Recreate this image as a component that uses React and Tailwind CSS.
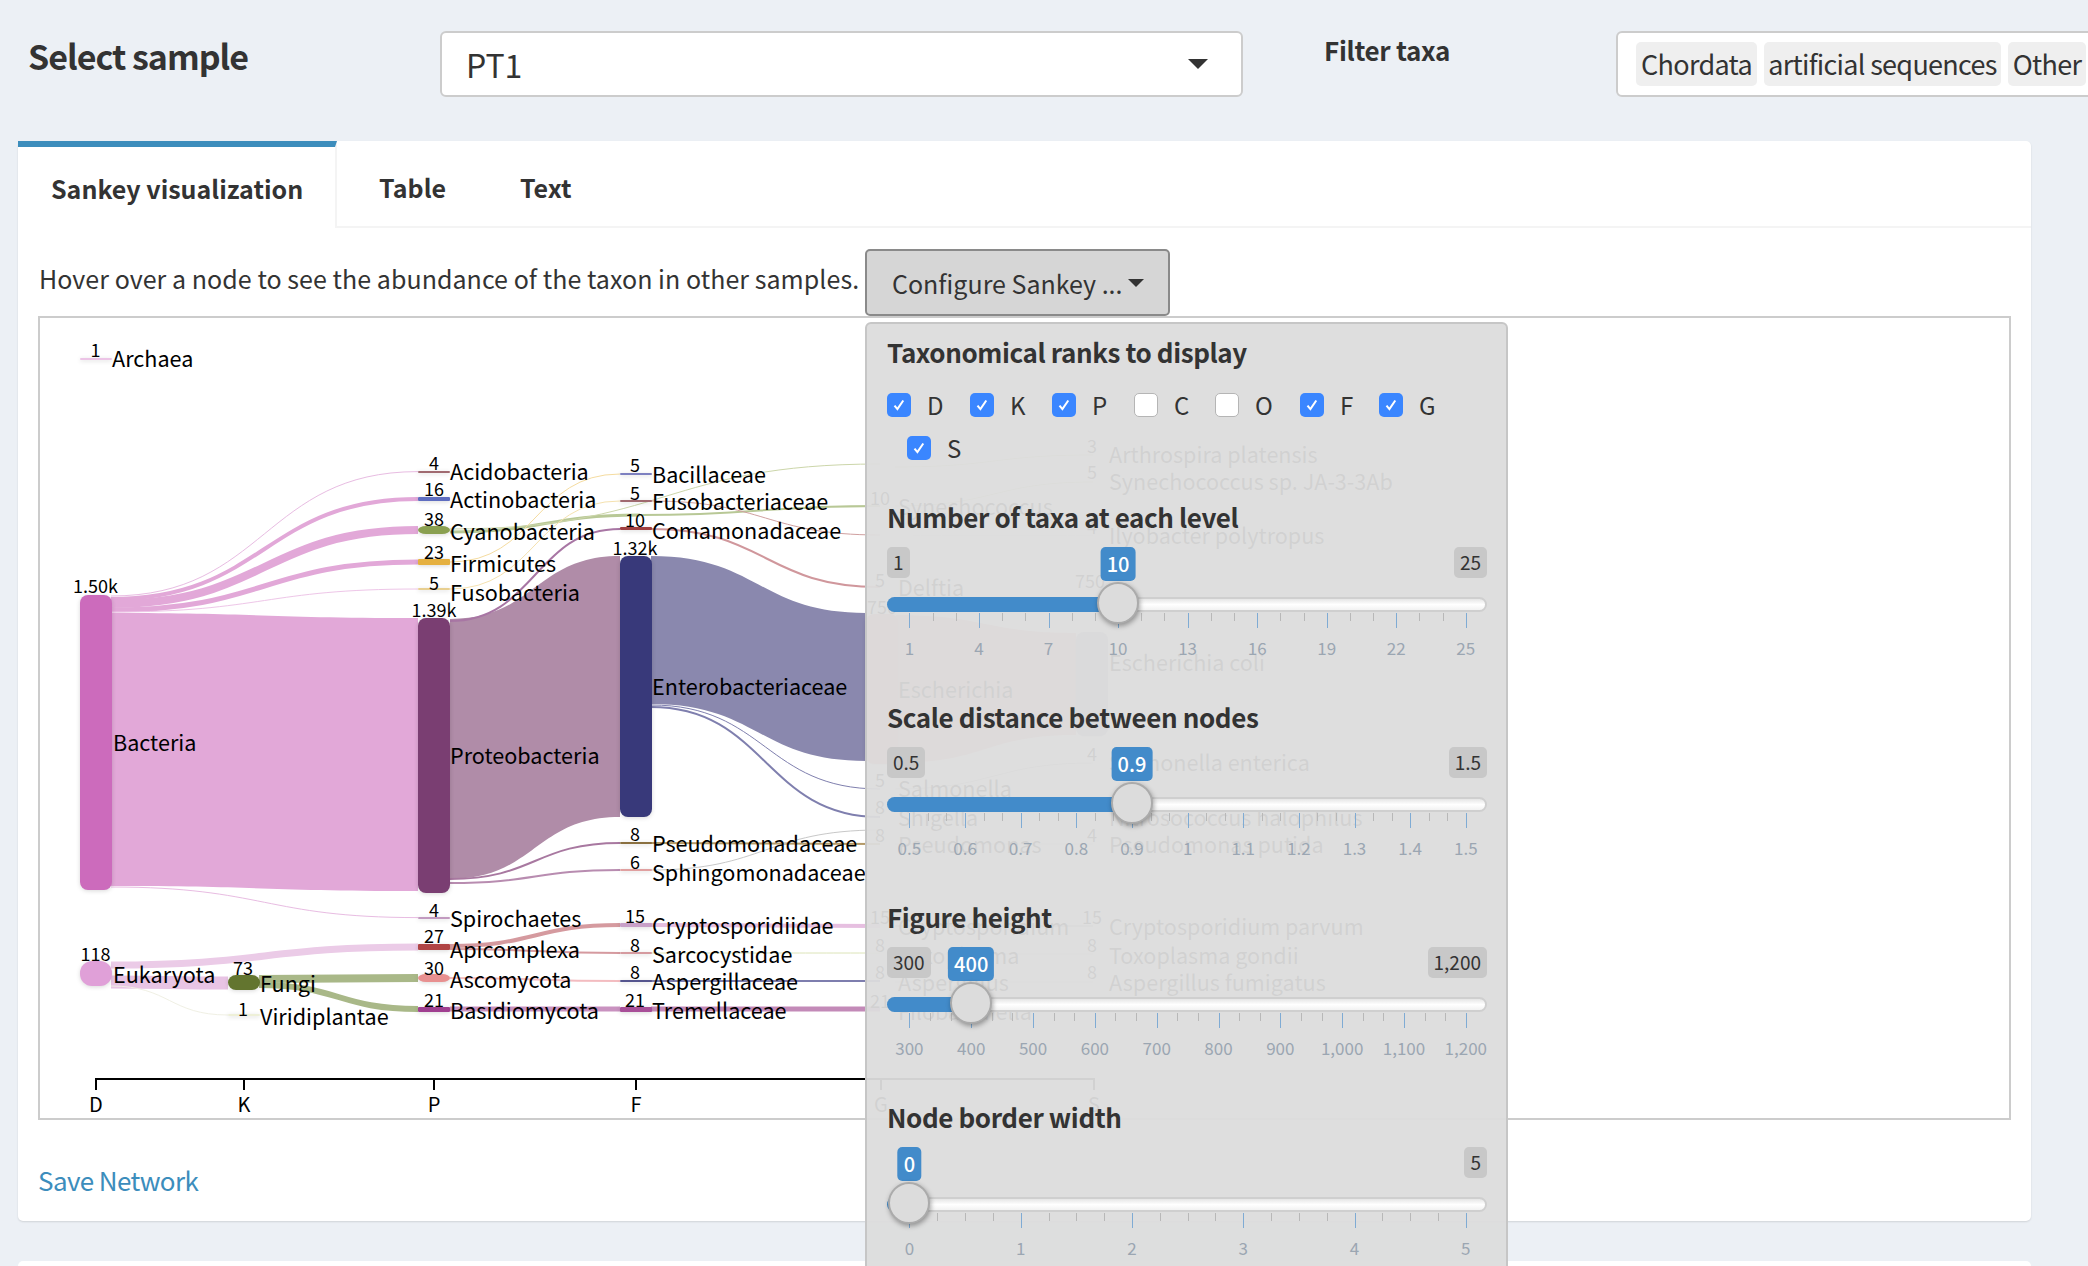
import React from "react";

// horizontal sankey band between two points
const band = (x0, y0, x1, y1) => {
  const xm = (x0 + x1) / 2;
  return `M${x0} ${y0}C${xm} ${y0} ${xm} ${y1} ${x1} ${y1}`;
};

// filled sankey band with a top and bottom edge
const ribbon = (x0, t0, b0, x1, t1, b1) => {
  const xm = (x0 + x1) / 2;
  return `M${x0} ${t0}C${xm} ${t0} ${xm} ${t1} ${x1} ${t1}L${x1} ${b1}C${xm} ${b1} ${xm} ${b0} ${x0} ${b0}Z`;
};

const links = [
  [111, 597, 418, 472.6, 1, "#e8bce2"],
  [111, 600, 418, 500, 4, "#e2a8d8"],
  [111, 605, 418, 531, 8, "#e2a8d8"],
  [111, 611, 418, 563, 5, "#e2a8d8"],
  [111, 613, 418, 590, 1, "#eec6e8"],
  [111, 888, 418, 918.6, 1, "#e8bce2"],
  [111, 966, 418, 948, 7, "#ebcbe7"],
  [111, 983, 228, 984, 13, "#e8c4e4"],
  [111, 987, 228, 1016, 1, "#f0f0e4"],
  [259, 980, 418, 979, 8, "#a9b888"],
  [259, 986, 418, 1010, 6, "#a9b888"],
  [450, 947, 620, 926, 4, "#d59a9f"],
  [450, 950, 620, 954, 2, "#d59a9f"],
  [450, 979, 620, 982, 2, "#f3bcc0"],
  [450, 1010, 620, 1010, 5, "#c992c0"],
  [450, 533, 640, 516, 3, "#b8c896"],
  [450, 530, 880, 465, 1, "#ccd6aa"],
  [640, 516, 880, 507, 2, "#b8c896"],
  [450, 563, 620, 475, 1, "#f5dca0"],
  [450, 590, 620, 502, 1, "#f5e2b0"],
  [450, 622, 620, 530, 2, "#a876a4"],
  [450, 880, 620, 844, 2, "#a878a0"],
  [450, 884, 620, 871, 2, "#b88cb0"],
  [651, 530, 880, 588, 2, "#d0979c"],
  [651, 502, 880, 536, 1, "#d0a0a0"],
  [651, 706, 880, 790, 1, "#7f7fae"],
  [651, 708, 880, 818, 2, "#7f7fae"],
  [651, 844, 880, 845, 2, "#b49a68"],
  [651, 871, 880, 831, 1, "#c8c8c8"],
  [651, 926, 880, 927, 4, "#e6bfe0"],
  [651, 954, 880, 954, 1, "#dce4b8"],
  [651, 982, 880, 982, 2, "#7e7eae"],
  [651, 1010, 880, 1010, 5, "#c38ab8"],
  [895, 468, 1093, 456, 1, "#ccd6aa"],
  [895, 507, 1093, 483, 1, "#ccd6aa"],
  [895, 536, 1093, 537, 1, "#ddd"],
  [895, 790, 1093, 764, 1, "#bbb"],
  [895, 845, 1093, 845, 1, "#bbb"],
  [895, 927, 1093, 927, 2, "#bbb"],
  [895, 955, 1093, 955, 1, "#bbb"],
  [895, 983, 1093, 983, 1, "#bbb"],
];

const nodes = [
  [80, 596, 32, 295, "#cc6bbc"],
  [80, 962, 32, 25, "#e0a0d8"],
  [80, 359, 32, 2, "#ecc4e6"],
  [228, 976, 32, 15, "#63752f"],
  [228, 1015, 32, 2, "#eef0d8"],
  [418, 619, 32, 275, "#7a3e72"],
  [418, 472, 32, 2, "#a06a70"],
  [418, 498, 32, 4, "#5f6dc0"],
  [418, 527, 32, 8, "#8aa050"],
  [418, 560, 32, 6, "#e5b040"],
  [418, 589, 32, 2, "#e8cf90"],
  [418, 918, 32, 2, "#c29ac0"],
  [418, 945, 32, 6, "#b04444"],
  [418, 975, 32, 8, "#e89090"],
  [418, 1008, 32, 5, "#a03f90"],
  [620, 557, 32, 261, "#38397a"],
  [620, 474, 32, 2, "#7d80c0"],
  [620, 501, 32, 2, "#a06a70"],
  [620, 528, 32, 3, "#a04040"],
  [620, 843, 32, 2, "#8a7040"],
  [620, 870, 32, 2, "#e0a0a0"],
  [620, 924, 32, 4, "#c8a0c8"],
  [620, 953, 32, 2, "#d59a9f"],
  [620, 981, 32, 2, "#55558e"],
  [620, 1008, 32, 5, "#a84f98"],
  [866, 615, 32, 150, "#e8a0a0"],
  [1076, 633, 32, 104, "#a8a8c4"],
];

const names = [
  ["Archaea", 112, 358],
  ["Bacteria", 113, 742.5],
  ["Eukaryota", 113, 974.5],
  ["Fungi", 260, 983.5],
  ["Viridiplantae", 260, 1016.5],
  ["Acidobacteria", 450, 471.5],
  ["Actinobacteria", 450, 499],
  ["Cyanobacteria", 450, 531],
  ["Firmicutes", 450, 563.5],
  ["Fusobacteria", 450, 592],
  ["Proteobacteria", 450, 755],
  ["Spirochaetes", 450, 918.5],
  ["Apicomplexa", 450, 949],
  ["Ascomycota", 450, 979],
  ["Basidiomycota", 450, 1010],
  ["Bacillaceae", 652, 474],
  ["Fusobacteriaceae", 652, 501.5],
  ["Comamonadaceae", 652, 530],
  ["Enterobacteriaceae", 652, 686.5],
  ["Pseudomonadaceae", 652, 843],
  ["Sphingomonadaceae", 652, 872],
  ["Cryptosporidiidae", 652, 925],
  ["Sarcocystidae", 652, 954],
  ["Aspergillaceae", 652, 981],
  ["Tremellaceae", 652, 1010],
  ["Synechococcus", 898, 506],
  ["Delftia", 898, 587],
  ["Escherichia", 898, 689],
  ["Salmonella", 898, 788],
  ["Shigella", 898, 817],
  ["Pseudomonas", 898, 844],
  ["Cryptosporidium", 898, 926],
  ["Toxoplasma", 898, 955],
  ["Aspergillus", 898, 982],
  ["Filobasidiella", 898, 1011],
  ["Arthrospira platensis", 1109, 454],
  ["Synechococcus sp. JA-3-3Ab", 1109, 481],
  ["Ilyobacter polytropus", 1109, 535],
  ["Escherichia coli", 1109, 662],
  ["Salmonella enterica", 1109, 762],
  ["Nitrosococcus halophilus", 1109, 817],
  ["Pseudomonas putida", 1109, 844],
  ["Cryptosporidium parvum", 1109, 926],
  ["Toxoplasma gondii", 1109, 955],
  ["Aspergillus fumigatus", 1109, 982],
];

const counts = [
  ["1", 95.5, 350],
  ["1.50k", 95.5, 586],
  ["118", 95.5, 954],
  ["73", 243, 968],
  ["1", 243, 1009],
  ["4", 434, 463],
  ["16", 434, 489],
  ["38", 434, 519],
  ["23", 434, 552],
  ["5", 434, 582.5],
  ["1.39k", 434, 610],
  ["4", 434, 910],
  ["27", 434, 936],
  ["30", 434, 968],
  ["21", 434, 1000],
  ["5", 635, 465],
  ["5", 635, 493],
  ["10", 635, 520],
  ["1.32k", 635, 548],
  ["8", 635, 834],
  ["6", 635, 862],
  ["15", 635, 916],
  ["8", 635, 945],
  ["8", 635, 972],
  ["21", 635, 1000],
  ["10", 880, 498],
  ["5", 880, 580],
  ["750", 882, 607],
  ["5", 880, 780],
  ["8", 880, 807],
  ["8", 880, 835],
  ["15", 880, 917],
  ["8", 880, 945],
  ["8", 880, 972],
  ["21", 880, 1001],
  ["3", 1092, 446],
  ["5", 1092, 472],
  ["4", 1092, 527],
  ["750", 1090, 581],
  ["4", 1092, 754],
  ["4", 1092, 835],
  ["15", 1092, 917],
  ["8", 1092, 945],
  ["8", 1092, 972],
];

const SankeyChart = () => (
  <svg viewBox="40 319 1969 800" width="1969" height="800" className="block">
    {/* big bands first so the thin ones sit on top */}
    <path d={ribbon(111, 614, 887, 418, 619, 892)} fill="#e2a8d8" />
    <path d={ribbon(450, 620, 880, 620, 557, 818)} fill="#b08ca8" />
    <path d={ribbon(651, 557, 705, 866, 614, 762)} fill="#8a88ae" />
    <path d={ribbon(896, 616, 764, 1076, 634, 736)} fill="#e8b4b4" />
    {links.map(([x0, y0, x1, y1, w, c], i) => (
      <path key={i} d={band(x0, y0, x1, y1)} stroke={c} strokeWidth={w} fill="none" />
    ))}
    {nodes.map(([x, y, w, h, c], i) => (
      <rect key={i} x={x} y={y} width={w} height={h} rx={h > 20 && h < 30 ? 12 : h > 6 ? 8 : 1} fill={c} className="drop-shadow-sm" />
    ))}
    {names.map(([t, x, y], i) => (
      <text key={i} x={x} y={y} fontSize="21.6" fill="#000" dominantBaseline="central">
        {t}
      </text>
    ))}
    {counts.map(([t, x, y], i) => (
      <text key={i} x={x} y={y} fontSize="18" fill="#000" textAnchor="middle" dominantBaseline="central">
        {t}
      </text>
    ))}
    <path d="M96 1091V1080H1094V1091M244 1080V1091M434 1080V1091M636 1080V1091M881 1080V1091" stroke="#000" strokeWidth="2" fill="none" />
    {[["D", 96], ["K", 244], ["P", 434], ["F", 636], ["G", 881], ["S", 1094]].map(([t, x]) => (
      <text key={t} x={x} y={1104} fontSize="20" fill="#000" textAnchor="middle" dominantBaseline="central">
        {t}
      </text>
    ))}
  </svg>
);

const RankCheck = ({ label, checked, className }) => (
  <div className={`flex items-center gap-[16px] ${className}`}>
    {checked ? (
      <span className="flex h-[24px] w-[24px] items-center justify-center rounded-[5px] bg-[#3a86ff]">
        <svg viewBox="0 0 16 16" className="h-[18px] w-[18px]">
          <path d="M4 8.5l2.6 3.2L11.8 4" fill="none" stroke="#fff" strokeWidth="1.8" />
        </svg>
      </span>
    ) : (
      <span className="h-[24px] w-[24px] rounded-[5px] border border-[#b5b5b5] bg-white" />
    )}
    <span className="text-[24px] leading-[24px] text-[#333]">{label}</span>
  </div>
);

const PanelHeading = ({ children }) => (
  <h4 className="relative -top-[1px] h-[40px] text-[26px] font-bold leading-[40px] tracking-[-0.4px] text-[#333]">{children}</h4>
);

const Slider = ({ title, min, max, value, pos, labels, minors }) => {
  const center = 22.4 + pos * 556.4;
  const step = 556.4 / (labels.length - 1);
  const minorTicks = [];
  for (let i = 0; i < labels.length - 1; i++) {
    for (let j = 1; j <= minors; j++) {
      minorTicks.push(22.4 + step * (i + j / (minors + 1)));
    }
  }
  return (
    <div className="w-[600px]">
      <PanelHeading>{title}</PanelHeading>
      <div className="relative h-[160px]">
        {pos > 0 && (
          <span className="absolute left-0 top-[9px] flex h-[31px] items-center rounded-[5px] bg-[#c8c8c8] px-[6px] text-[19px] text-[#333]">{min}</span>
        )}
        <span className="absolute right-0 top-[9px] flex h-[31px] items-center rounded-[5px] bg-[#c8c8c8] px-[6px] text-[19px] text-[#333]">{max}</span>
        <div className="absolute left-0 right-0 top-[59px] h-[15px] rounded-full border-2 border-[#cfcfcf] bg-gradient-to-b from-[#e6e6e6] via-white to-[#f2f2f2]" />
        <div className="absolute left-0 top-[59px] h-[15px] rounded-l-full bg-[#428bca]" style={{ width: center }} />
        {minorTicks.map((x, i) => (
          <span key={i} className="absolute top-[75px] h-[8px] w-[1px] bg-[#b8b8b8]" style={{ left: x }} />
        ))}
        {labels.map((t, i) => (
          <span key={t} className="absolute top-[75px] h-[15px] w-[1px] bg-[#7fabd4]" style={{ left: 22.4 + step * i }} />
        ))}
        {labels.map((t, i) => (
          <span key={t} className="absolute top-[96px] w-[60px] -translate-x-1/2 text-center text-[17px] leading-[28px] text-[#9ba6b2]" style={{ left: 22.4 + step * i }}>
            {t}
          </span>
        ))}
        <span className="absolute top-[9px] flex h-[34px] -translate-x-1/2 items-center rounded-[5px] bg-[#428bca] px-[6px] text-[20px] font-medium text-white" style={{ left: center }}>
          {value}
        </span>
        <span className="absolute top-[44px] h-[42px] w-[42px] -translate-x-1/2 rounded-full border-2 border-[#ababab] bg-[#dcdcdc] shadow-[1px_2px_5px_rgba(0,0,0,0.35)]" style={{ left: center }} />
      </div>
    </div>
  );
};

const ConfigPanel = () => (
  <div className="absolute left-[826px] top-[73px] h-[1000px] w-[643px] rounded-[6px] border-2 border-[#c6c6c6] bg-[#dcdcdc]/95 pl-[20px] pt-[9px]">
    <PanelHeading>Taxonomical ranks to display</PanelHeading>
    <div className="mt-[20px] flex">
      <RankCheck label="D" checked className="w-[83px]" />
      <RankCheck label="K" checked className="w-[82px]" />
      <RankCheck label="P" checked className="w-[82px]" />
      <RankCheck label="C" className="w-[81px]" />
      <RankCheck label="O" className="w-[85px]" />
      <RankCheck label="F" checked className="w-[79px]" />
      <RankCheck label="G" checked />
    </div>
    <div className="ml-[20px] mt-[19px] mb-[38px] flex">
      <RankCheck label="S" checked />
    </div>
    <Slider title="Number of taxa at each level" min="1" max="25" value="10" pos={0.375} minors={2} labels={["1", "4", "7", "10", "13", "16", "19", "22", "25"]} />
    <Slider title="Scale distance between nodes" min="0.5" max="1.5" value="0.9" pos={0.4} minors={2} labels={["0.5", "0.6", "0.7", "0.8", "0.9", "1", "1.1", "1.2", "1.3", "1.4", "1.5"]} />
    <Slider title="Figure height" min="300" max="1,200" value="400" pos={1 / 9} minors={2} labels={["300", "400", "500", "600", "700", "800", "900", "1,000", "1,100", "1,200"]} />
    <Slider title="Node border width" min="0" max="5" value="0" pos={0} minors={3} labels={["0", "1", "2", "3", "4", "5"]} />
  </div>
);

const App = () => {
  return (
    <div className="relative h-[1266px] w-[2088px] overflow-hidden bg-[#ecf0f5] pt-[31px] font-['Noto_Sans_CJK_SC','Open_Sans',sans-serif] text-[#333]">
      {/* sample select and taxa filter */}
      <div className="flex h-[66px] items-start pl-[28px]">
        <h3 className="mt-[3px] w-[412px] shrink-0 text-[34px] font-bold leading-[44px] tracking-[-1px]">Select sample</h3>
        <div className="flex h-[66px] w-[803px] shrink-0 items-center justify-between rounded-[6px] border-2 border-[#cccccc] bg-white pl-[24px] pr-[33px]">
          <span className="text-[32px] leading-[40px]">PT1</span>
          <span className="h-0 w-0 border-x-[10px] border-t-[10px] border-x-transparent border-t-[#333]" />
        </div>
        <h4 className="ml-[81px] mt-[1px] w-[292px] shrink-0 text-[26px] font-bold leading-[36px] tracking-[-0.3px]">Filter taxa</h4>
        <div className="flex h-[66px] w-[500px] shrink-0 gap-[7px] rounded-[6px] border-2 border-[#cccccc] bg-white pl-[18px] pt-[9px] text-[27px] tracking-[-0.7px]">
          <span className="flex h-[44px] w-[121px] shrink-0 items-center justify-center whitespace-nowrap rounded-[5px] bg-[#efefef]">Chordata</span>
          <span className="flex h-[44px] w-[237px] shrink-0 items-center justify-center whitespace-nowrap rounded-[5px] bg-[#efefef]">artificial sequences</span>
          <span className="flex h-[44px] w-[78px] shrink-0 items-center justify-center whitespace-nowrap rounded-[5px] bg-[#efefef]">Other</span>
        </div>
      </div>

      {/* main box with tabs */}
      <div className="ml-[18px] mt-[44px] h-[1080px] w-[2013px] rounded-[5px] bg-white shadow-[0_1px_2px_rgba(0,0,0,0.12)]">
        <div className="flex h-[87px] border-b-2 border-[#f4f4f4]">
          <div className="-mb-[2px] flex h-[87px] w-[319px] items-center border-r-2 border-t-[6px] border-[#f4f4f4] border-t-[#3c8dbc] bg-white pl-[33px] pt-[2px] text-[25px] font-bold">
            Sankey visualization
          </div>
          <div className="ml-[42px] flex items-center pt-[8px] text-[25px] font-bold">Table</div>
          <div className="ml-[74px] flex items-center pt-[8px] text-[25px] font-bold">Text</div>
        </div>

        <div className="relative ml-[21px] mt-[21px]">
          <div className="flex h-[67px]">
            <p className="mt-[8px] w-[826px] shrink-0 whitespace-nowrap text-[25px] leading-[42px] tracking-[0.05px]">Hover over a node to see the abundance of the taxon in other samples.</p>
            <div className="flex h-[67px] w-[305px] items-center gap-[6px] rounded-[5px] border-2 border-[#8a8a8a] bg-[#d6d6d6] pl-[25px]">
              <span className="text-[25px] leading-[34px]">Configure Sankey ...</span>
              <span className="h-0 w-0 border-x-[8px] border-t-[8px] border-x-transparent border-t-[#333]" />
            </div>
          </div>
          <div className="-ml-[1px] h-[804px] w-[1973px] border-2 border-[#cccccc] bg-white">
            <SankeyChart />
          </div>
          <a className="-ml-[1px] mt-[40px] block text-[26px] leading-[40px] tracking-[-0.6px] text-[#3c8dbc]">Save Network</a>
          <ConfigPanel />
        </div>
      </div>

      <div className="ml-[18px] mt-[40px] h-[40px] w-[2013px] rounded-[5px] bg-white" />
    </div>
  );
};

export default App;
